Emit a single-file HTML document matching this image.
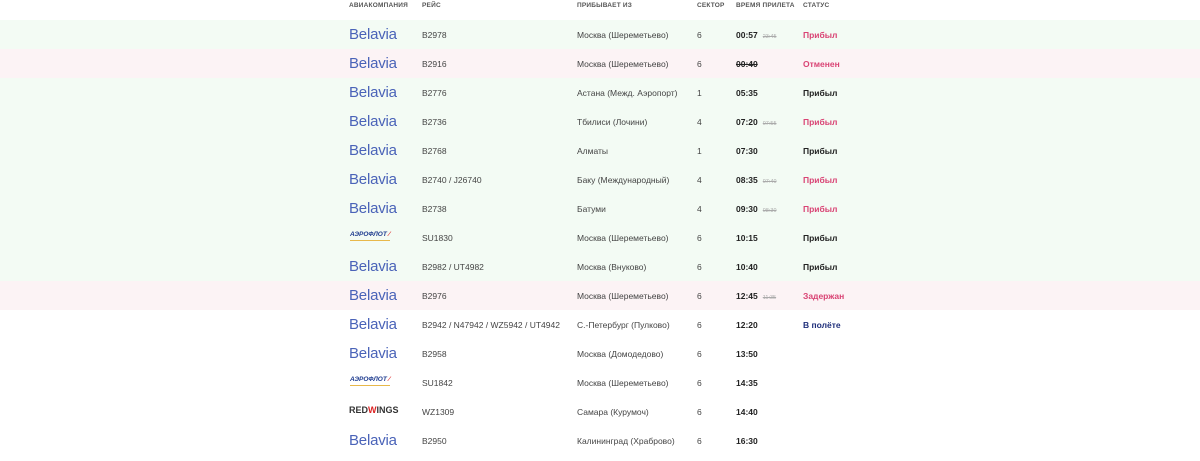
<!DOCTYPE html>
<html><head><meta charset="utf-8"><style>
body{margin:0;width:1200px;height:461px;background:#fff;font-family:"Liberation Sans",sans-serif;position:relative;overflow:hidden;color:#444}
.h{position:absolute;top:2px;font-size:6.5px;font-weight:bold;color:#555;letter-spacing:.2px}
.r{position:absolute;left:0;width:1200px;height:29px;font-size:8.5px}
.g{background:#f3fbf4}.p{background:#fcf3f5}
.r span{position:absolute;top:10px}
.bl{left:349px;top:6px!important;font-size:15px;color:#4a63b8;letter-spacing:-.2px}
.f{left:422px}.fr{left:577px}.s{left:697px}
.t{left:736px;font-weight:bold;color:#222}
.t small{font-weight:normal;font-size:5.5px;color:#aaa;text-decoration:line-through;margin-left:5px}
.st{left:803px;font-weight:bold;color:#222}
.pk{color:#d94374!important}.bu{color:#1e2e7a!important}
.aer{left:350px;top:8px!important;font-size:6.5px;font-weight:bold;color:#1f3c8f;font-style:italic;border-bottom:1px solid #e8b84a;padding-bottom:2px}
.rw{left:349px;top:8px!important;font-size:9px;font-weight:bold;color:#333}
</style></head><body>
<div class="h" style="left:349px">АВИАКОМПАНИЯ</div>
<div class="h" style="left:422px">РЕЙС</div>
<div class="h" style="left:577px">ПРИБЫВАЕТ ИЗ</div>
<div class="h" style="left:697px">СЕКТОР</div>
<div class="h" style="left:736px">ВРЕМЯ ПРИЛЕТА</div>
<div class="h" style="left:803px">СТАТУС</div>

<div class="r g" style="top:20px"><span class="bl">Belavia</span><span class="f">B2978</span><span class="fr">Москва (Шереметьево)</span><span class="s">6</span><span class="t">00:57<small>23:45</small></span><span class="st pk">Прибыл</span></div>
<div class="r p" style="top:49px"><span class="bl">Belavia</span><span class="f">B2916</span><span class="fr">Москва (Шереметьево)</span><span class="s">6</span><span class="t" style="text-decoration:line-through">00:40</span><span class="st pk">Отменен</span></div>
<div class="r g" style="top:78px"><span class="bl">Belavia</span><span class="f">B2776</span><span class="fr">Астана (Межд. Аэропорт)</span><span class="s">1</span><span class="t">05:35</span><span class="st">Прибыл</span></div>
<div class="r g" style="top:107px"><span class="bl">Belavia</span><span class="f">B2736</span><span class="fr">Тбилиси (Лочини)</span><span class="s">4</span><span class="t">07:20<small>07:55</small></span><span class="st pk">Прибыл</span></div>
<div class="r g" style="top:136px"><span class="bl">Belavia</span><span class="f">B2768</span><span class="fr">Алматы</span><span class="s">1</span><span class="t">07:30</span><span class="st">Прибыл</span></div>
<div class="r g" style="top:165px"><span class="bl">Belavia</span><span class="f">B2740 / J26740</span><span class="fr">Баку (Международный)</span><span class="s">4</span><span class="t">08:35<small>07:40</small></span><span class="st pk">Прибыл</span></div>
<div class="r g" style="top:194px"><span class="bl">Belavia</span><span class="f">B2738</span><span class="fr">Батуми</span><span class="s">4</span><span class="t">09:30<small>08:30</small></span><span class="st pk">Прибыл</span></div>
<div class="r g" style="top:223px"><span class="aer">АЭРОФЛОТ <span style="position:static;color:#d22">⁄</span></span><span class="f">SU1830</span><span class="fr">Москва (Шереметьево)</span><span class="s">6</span><span class="t">10:15</span><span class="st">Прибыл</span></div>
<div class="r g" style="top:252px"><span class="bl">Belavia</span><span class="f">B2982 / UT4982</span><span class="fr">Москва (Внуково)</span><span class="s">6</span><span class="t">10:40</span><span class="st">Прибыл</span></div>
<div class="r p" style="top:281px"><span class="bl">Belavia</span><span class="f">B2976</span><span class="fr">Москва (Шереметьево)</span><span class="s">6</span><span class="t">12:45<small>11:35</small></span><span class="st pk">Задержан</span></div>
<div class="r" style="top:310px"><span class="bl">Belavia</span><span class="f">B2942 / N47942 / WZ5942 / UT4942</span><span class="fr">С.-Петербург (Пулково)</span><span class="s">6</span><span class="t">12:20</span><span class="st bu">В полёте</span></div>
<div class="r" style="top:339px"><span class="bl">Belavia</span><span class="f">B2958</span><span class="fr">Москва (Домодедово)</span><span class="s">6</span><span class="t">13:50</span></div>
<div class="r" style="top:368px"><span class="aer">АЭРОФЛОТ <span style="position:static;color:#d22">⁄</span></span><span class="f">SU1842</span><span class="fr">Москва (Шереметьево)</span><span class="s">6</span><span class="t">14:35</span></div>
<div class="r" style="top:397px"><span class="rw">RED<span style="position:static;color:#d22">W</span>INGS</span><span class="f">WZ1309</span><span class="fr">Самара (Курумоч)</span><span class="s">6</span><span class="t">14:40</span></div>
<div class="r" style="top:426px"><span class="bl">Belavia</span><span class="f">B2950</span><span class="fr">Калининград (Храброво)</span><span class="s">6</span><span class="t">16:30</span></div>
</body></html>
